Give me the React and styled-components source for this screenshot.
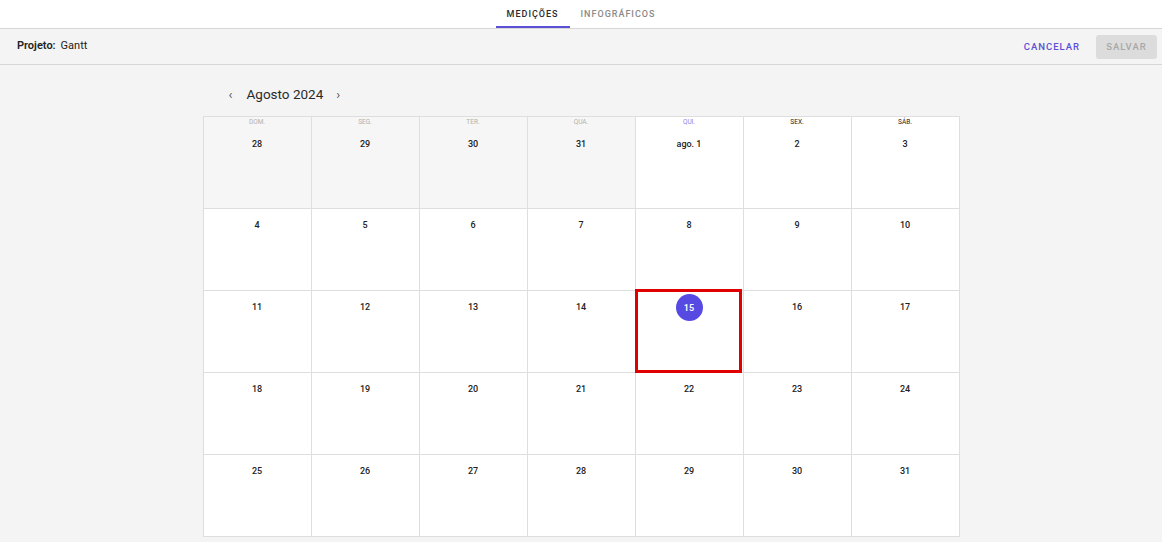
import React from 'react';
import styled, { createGlobalStyle } from 'styled-components';

const GlobalStyle = createGlobalStyle`
  html, body {
    margin: 0;
    padding: 0;
    background: #f4f4f4;
    font-family: Roboto, "Liberation Sans", sans-serif;
  }
`;

const Page = styled.div`
  width: 1162px;
  height: 542px;
  overflow: hidden;
  background: #f4f4f4;
`;

const TabBar = styled.div`
  height: 28px;
  background: #fff;
  border-bottom: 1px solid #d6d6d6;
  display: flex;
  justify-content: center;
`;

const Tab = styled.div`
  height: 28px;
  box-sizing: border-box;
  padding: 2px 11px 0;
  display: flex;
  align-items: center;
  font-size: 9px;
  font-weight: 500;
  letter-spacing: 1px;
  color: ${({ active }) => (active ? '#2b2b2b' : '#8a8a8a')};
  border-bottom: 2px solid ${({ active }) => (active ? '#5b4fd6' : 'transparent')};
`;

const Toolbar = styled.div`
  height: 35px;
  border-bottom: 1px solid #d6d6d6;
  display: flex;
  align-items: center;
  padding: 0 5px 0 17px;
`;

const ProjectLabel = styled.div`
  font-size: 11px;
  color: #222;
  flex: 1;
  margin-top: -3px;
  b {
    font-weight: 600;
    margin-right: 5px;
  }
`;

const TextButton = styled.button`
  background: none;
  border: none;
  font-family: inherit;
  font-size: 9.5px;
  font-weight: 500;
  letter-spacing: 1px;
  color: #5b4fd6;
  padding: 0;
  margin-right: 16px;
`;

const SaveButton = styled.button`
  background: #dcdcdc;
  border: none;
  border-radius: 3px;
  width: 61px;
  height: 24px;
  font-family: inherit;
  font-size: 9.5px;
  font-weight: 500;
  letter-spacing: 1px;
  color: #a8a8a8;
  padding: 0;
`;

const CalendarWrap = styled.div`
  width: 757px;
  margin: 0 auto;
`;

const MonthHeader = styled.div`
  height: 51px;
  display: flex;
  align-items: center;
  padding-left: 22px;
  box-sizing: border-box;
  padding-top: 7px;
`;

const Chevron = styled.span`
  font-size: 13px;
  color: #555;
  width: 12px;
  text-align: center;
`;

const MonthTitle = styled.div`
  font-size: 13.5px;
  color: #2a2a2a;
  margin: 0 9px 0 10px;
`;

const Grid = styled.div`
  display: grid;
  grid-template-columns: repeat(7, 108px);
  grid-template-rows: 92px repeat(4, 82px);
  border-top: 1px solid #dedede;
  border-left: 1px solid #dedede;
  width: 757px;
  box-sizing: border-box;
`;

const Cell = styled.div`
  position: relative;
  background: ${({ muted }) => (muted ? '#f6f6f6' : '#fff')};
  border-right: 1px solid #dedede;
  border-bottom: 1px solid #dedede;
  display: flex;
  flex-direction: column;
  align-items: center;
  padding-top: ${({ first }) => (first ? '0' : '8px')};
`;

const DayName = styled.div`
  font-size: 6.5px;
  height: 11px;
  line-height: 11px;
  color: ${({ tone }) => tone};
  margin-bottom: 8px;
`;

const DayNumber = styled.div`
  font-size: 9px;
  font-weight: 500;
  color: #222;
  height: 16px;
  line-height: 16px;
`;

const Today = styled.div`
  width: 27px;
  height: 27px;
  border-radius: 50%;
  background: #574ae3;
  color: #fff;
  font-size: 9px;
  font-weight: 600;
  display: flex;
  align-items: center;
  justify-content: center;
  margin-top: -5px;
`;

const Highlight = styled.div`
  position: absolute;
  left: -1px;
  top: -2px;
  width: 107px;
  height: 84px;
  box-sizing: border-box;
  border: 3px solid #e00000;
  pointer-events: none;
`;

const dayNames = [
  ['DOM.', '#b0b0b0'],
  ['SEG.', '#b0b0b0'],
  ['TER.', '#b0b0b0'],
  ['QUA.', '#b0b0b0'],
  ['QUI.', '#8c7fe0'],
  ['SEX.', '#222'],
  ['SÁB.', '#222'],
];

const firstRow = [
  { label: '28', muted: true },
  { label: '29', muted: true },
  { label: '30', muted: true },
  { label: '31', muted: true },
  { label: 'ago. 1' },
  { label: '2' },
  { label: '3' },
];

const App = () => {
  const rest = [];
  for (let d = 4; d <= 31; d += 1) rest.push(d);

  return (
    <Page>
      <GlobalStyle />
      <TabBar>
        <Tab active>MEDIÇÕES</Tab>
        <Tab>INFOGRÁFICOS</Tab>
      </TabBar>
      <Toolbar>
        <ProjectLabel>
          <b>Projeto:</b>Gantt
        </ProjectLabel>
        <TextButton>CANCELAR</TextButton>
        <SaveButton disabled>SALVAR</SaveButton>
      </Toolbar>
      <CalendarWrap>
        <MonthHeader>
          <Chevron>‹</Chevron>
          <MonthTitle>Agosto 2024</MonthTitle>
          <Chevron>›</Chevron>
        </MonthHeader>
        <Grid>
          {firstRow.map((c, i) => (
            <Cell key={c.label} muted={c.muted} first>
              <DayName tone={dayNames[i][1]}>{dayNames[i][0]}</DayName>
              <DayNumber>{c.label}</DayNumber>
            </Cell>
          ))}
          {rest.map((d) => (
            <Cell key={d}>
              {d === 15 ? (
                <>
                  <Today>15</Today>
                  <Highlight />
                </>
              ) : (
                <DayNumber>{d}</DayNumber>
              )}
            </Cell>
          ))}
        </Grid>
      </CalendarWrap>
    </Page>
  );
};

export default App;
